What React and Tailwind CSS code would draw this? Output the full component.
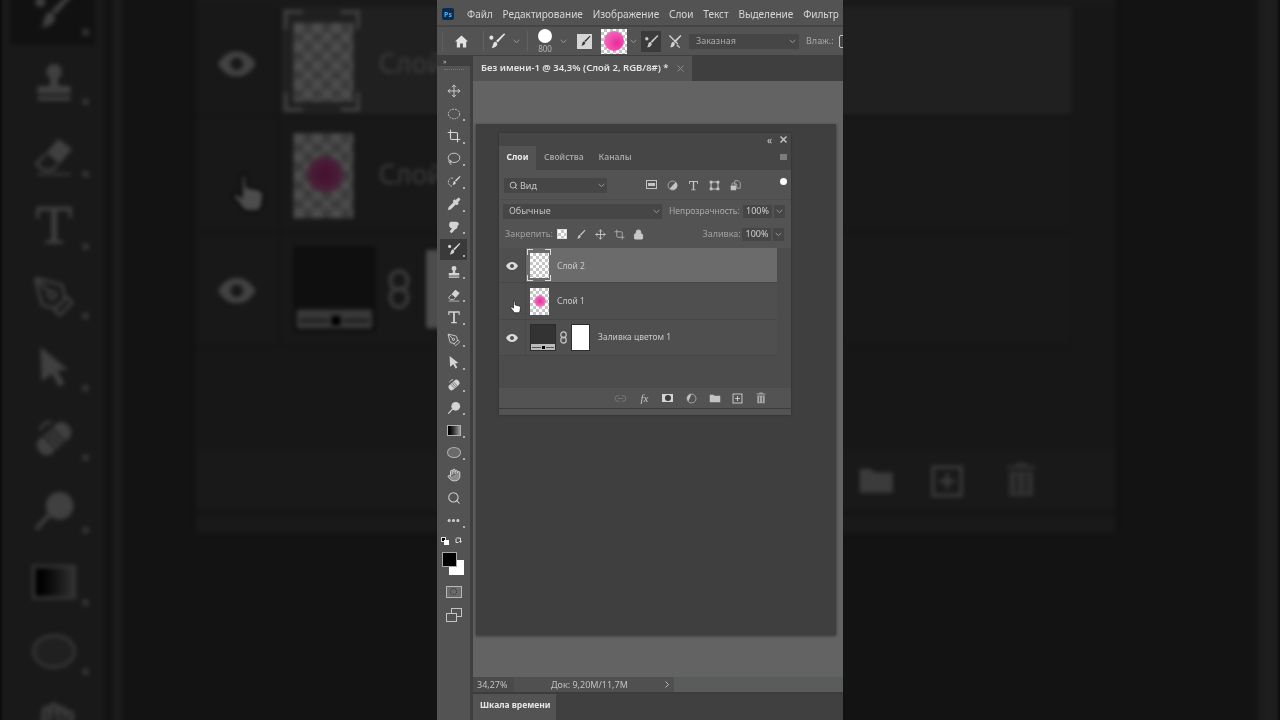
import { Move, Crop, Lasso, Pipette, PenTool, Hand, Search, Ellipsis, Link2, Lock } from "lucide-react";

const MENU = ["Файл", "Редактирование", "Изображение", "Слои", "Текст", "Выделение", "Фильтр"];
const FONT = "font-['Noto_Sans',sans-serif]";
const CHECKER = "bg-[conic-gradient(#c4c4c4_25%,#fff_0_50%,#c4c4c4_0_75%,#fff_0)] bg-[length:6px_6px]";

const Svg = ({ size = 14, children, className = "" }) => (
  <svg width={size} height={size} viewBox="0 0 16 16" fill="currentColor" className={`shrink-0 ${className}`}>{children}</svg>
);

const Chevron = ({ className = "" }) => (
  <svg width="7" height="5" viewBox="0 0 7 5" fill="none" stroke="currentColor" strokeWidth="1" className={`shrink-0 text-[#999] ${className}`}><path d="M.7 1l2.8 2.6L6.3 1" /></svg>
);

const BrushShape = () => (
  <>
    <path d="M14.3 1l1 1-6.6 7.4-1.6-1.4z" />
    <path d="M6.6 8.6c1.300.3 2 1.500 1.600 2.800-.5 1.700-2.700 2.800-5 2.800 1-1 1-2.300 1.400-3.500.4-1.200 1-2.300 2-2.100z" />
  </>
);

const HomeIcon = () => <Svg size={15}><path d="M8 1.500L1 8h2v6.500h3.500V10h3v4.500H13V8h2z" /></Svg>;
const BrushTool = ({ size = 14 }) => <Svg size={size}><circle cx="3" cy="5" r="1.800" /><BrushShape /></Svg>;
const Marquee = () => <Svg><ellipse cx="8" cy="8" rx="6.500" ry="5.500" fill="none" stroke="currentColor" strokeWidth="1" strokeDasharray="2 1.200" /></Svg>;
const QuickSelect = () => <Svg><path d="M7 3.500C3.500 3 1.500 5 1.500 8s2.500 5 5 5" fill="none" stroke="currentColor" strokeDasharray="2 1.200" /><path d="M14.500 1l1 1-5 5.500-1.500-1.300z" /><path d="M8.500 7c1.200.2 1.800 1.300 1.400 2.400-.4 1.200-2 2-3.600 2 .7-.9.600-1.700.9-2.700.3-1 .6-1.900 1.300-1.700z" /></Svg>;
const Healing = () => <Svg><path d="M4 2h6.500c2 0 3 1.200 3 2.600 0 1-.6 1.600-1.500 2 .4 1.800-.6 3.600-2.500 4L5.300 15 3 13l2.700-3.400C3.500 9 2 7.300 2.500 5 2.800 3.500 3 2.500 4 2z" /></Svg>;
const Stamp = () => <Svg><circle cx="8" cy="4" r="2.800" /><path d="M6.800 6h2.400l.4 3.200H14V12H2V9.200h4.400zM2 13h12v1.500H2z" /></Svg>;
const EraserIcon = () => <Svg><path d="M9.500 2l5 3.800-4.600 5.400-4.700-4z" /><path d="M5 7.600l-3.400 3.500 2.400 2.200h3.400L9.300 11.500" fill="none" stroke="currentColor" /><path d="M2 14.500h12v.8H2z" /></Svg>;
const TypeIcon = ({ size = 14 }) => <Svg size={size}><path d="M1.500 1.500h13v4.200h-1.200V3H9v10.800h2.200V15H4.800v-1.200H7V3H2.700v2.700H1.500z" /></Svg>;
const Arrow = () => <Svg><path d="M3 1l10 8.200-3.800.4 2.600 4.600-2 1.200-2.600-4.700L3.500 13.500z" /></Svg>;
const Bandage = () => <Svg><g transform="rotate(-42 8 8)"><rect x="1" y="4.500" width="14" height="7" rx="3" /><path d="M6 4.500v7M8 4.500v7M10 4.500v7" stroke="#535353" strokeWidth=".7" /></g><path d="M3 5c.5-2 2-3 4-3" fill="none" stroke="currentColor" /></Svg>;
const Sponge = () => <Svg><circle cx="10" cy="6" r="5" /><path d="M6.500 9L1.500 14.500" stroke="currentColor" strokeWidth="1.400" /></Svg>;

const Gradient = () => <div className="h-[11px] w-[14px] border border-[#b0b0b0] bg-linear-to-r from-black to-[#a0a0a0]" />;
const EllipseIcon = () => <div className="h-[11px] w-[14px] rounded-[50%] border border-[#b0b0b0] bg-[#6a6a6a]" />;

const TOOLS = [
  { key: "move", icon: <Move size={14} strokeWidth={1.600} />, fly: false },
  { key: "marquee", icon: <Marquee /> },
  { key: "crop", icon: <Crop size={14} strokeWidth={2} /> },
  { key: "lasso", icon: <Lasso size={14} strokeWidth={1.500} /> },
  { key: "quick", icon: <QuickSelect /> },
  { key: "drop", icon: <Pipette size={14} fill="currentColor" strokeWidth={1.500} /> },
  { key: "heal", icon: <Healing /> },
  { key: "brush", icon: <BrushTool />, active: true },
  { key: "stamp", icon: <Stamp /> },
  { key: "eraser", icon: <EraserIcon /> },
  { key: "type", icon: <TypeIcon /> },
  { key: "pen", icon: <PenTool size={14} strokeWidth={1.500} /> },
  { key: "arrow", icon: <Arrow /> },
  { key: "bandage", icon: <Bandage /> },
  { key: "sponge", icon: <Sponge /> },
  { key: "gradient", icon: <Gradient /> },
  { key: "ellipse", icon: <EllipseIcon /> },
  { key: "hand", icon: <Hand size={14} fill="#8c8c8c" strokeWidth={1.600} />, fly: false },
  { key: "zoom", icon: <Search size={14} strokeWidth={1.800} />, fly: false },
  { key: "more", icon: <Ellipsis size={15} strokeWidth={3} /> },
];

function Tool({ icon, active, fly = true }) {
  return (
    <div className="relative flex h-[22.6px] items-center justify-center text-[#d4d4d4]">
      {active && <div className="absolute inset-x-[3px] inset-y-px bg-[#3a3a3a]" />}
      <div className="relative">{icon}</div>
      {fly && <div className="absolute bottom-[4px] right-[5px] size-[2px] bg-[#b0b0b0]" />}
    </div>
  );
}

function ToolColumn() {
  return (
    <aside className="flex w-[33px] shrink-0 flex-col bg-[#535353]">
      <div className="flex h-[10px] items-center bg-[#3f3f3f] pl-[6px] text-[7px] leading-none text-[#bbb]"><span>»</span></div>
      <div className="flex h-[14px] items-start justify-center pt-[3px]"><div className="h-px w-[20px] border-t border-dotted border-[#777]" /></div>
      {TOOLS.map((t) => <Tool key={t.key} icon={t.icon} active={t.active} fly={t.fly} />)}
      <div className="mt-[5px] flex items-center justify-between pl-[4px] pr-[7px] text-[#ddd]">
        <div className="relative size-[8px]"><div className="absolute left-0 top-0 size-[5px] border border-[#ddd] bg-black" /><div className="absolute bottom-0 right-0 size-[5px] bg-white" /></div>
        <Svg size={8}><path d="M3 2h8v8M13 8l-2 3-2-3M2 3v8h5" fill="none" stroke="currentColor" strokeWidth="2" /></Svg>
      </div>
      <div className="relative mt-[7px] h-[24px] w-full">
        <div className="absolute left-[12px] top-[8px] size-[15px] bg-white" />
        <div className="absolute left-[5px] top-0 size-[15px] border border-[#aaa] bg-black" />
      </div>
      <div className="mx-auto mt-[10px] flex h-[12px] w-[16px] items-center justify-center border border-[#b8b8b8] bg-[#6a6a6a]"><div className="size-[7px] rounded-full border border-dotted border-[#333]" /></div>
      <div className="relative mx-auto mt-[10px] h-[14px] w-[16px]">
        <div className="absolute right-0 top-0 h-[9px] w-[11px] border border-[#c4c4c4]" />
        <div className="absolute bottom-0 left-0 h-[9px] w-[11px] border border-[#c4c4c4] bg-[#535353]" />
      </div>
    </aside>
  );
}

function OptionsBar() {
  return (
    <div className="flex h-[28px] shrink-0 items-center bg-[#535353] text-[#e2e2e2] [&>*]:shrink-0">
      <div className="ml-[5px] h-[20px] w-px bg-[#616161]" />
      <div className="ml-[11px]"><HomeIcon /></div>
      <div className="ml-[14px] h-[20px] w-px bg-[#616161]" />
      <div className="ml-[4px]"><BrushTool size={18} /></div>
      <Chevron className="ml-[7px]" />
      <div className="ml-[7px] h-[20px] w-px bg-[#616161]" />
      <div className="ml-[7px] flex w-[20px] flex-col items-center">
        <div className="size-[14px] rounded-full bg-white" />
        <span className="mt-[1px] text-[8px] leading-[9px] text-[#b4b4b4]">800</span>
      </div>
      <Chevron className="ml-[5px]" />
      <div className="ml-[10px] flex size-[15px] items-center justify-center bg-[#d6d6d6] text-[#333]"><Svg size={12}><BrushShape /></Svg></div>
      <div className={`ml-[9px] flex h-[25px] w-[26px] items-center justify-center ${CHECKER}`}>
        <div className="size-[20px] rounded-full bg-[radial-gradient(circle_at_65%_60%,#ec2a98,#f57fcb)]" />
      </div>
      <Chevron className="ml-[3px]" />
      <div className="ml-[4px] flex h-[21px] w-[20px] items-center justify-center bg-[#3b3b3b] text-[#c8c8c8]"><BrushTool size={15} /></div>
      <div className="ml-[6px] text-[#d4d4d4]"><Svg size={15}><BrushShape /><path d="M2 2l9 9 1-1-9-9zM10 12l3 3 1-1-3-3z" /></Svg></div>
      <div className="ml-[7px] flex h-[15px] w-[110px] items-center justify-between bg-[#464646] pl-[7px] pr-[3px] text-[9px] text-[#a8a8a8]">
        <span>Заказная</span><Chevron />
      </div>
      <span className="ml-[7px] text-[9px] text-[#a8a8a8]">Влаж.:</span>
      <div className="ml-[5px] h-[13px] w-[12px] rounded-[2px] border border-[#c4c4c4] bg-[#464646]" />
    </div>
  );
}

const Select = ({ className, children, icon }) => (
  <div className={`flex h-[15px] shrink-0 items-center justify-between bg-[#464646] pr-[2px] text-[9px] text-[#c4c4c4] ${className}`}>
    <span className="flex items-center gap-[2px]">{icon}{children}</span><Chevron />
  </div>
);

const Percent = ({ ml }) => (
  <div className={`flex items-center ${ml}`}>
    <div className="flex h-[13px] w-[29px] items-center justify-center bg-[#464646] text-[9px] text-[#cfcfcf]"><span>100%</span></div>
    <div className="ml-[2px] flex h-[13px] w-[11px] items-center justify-center bg-[#464646]"><Chevron /></div>
  </div>
);

const EyeIcon = () => (
  <svg width="12" height="8" viewBox="0 0 12 8" className="shrink-0"><path d="M0 4c1.500-2.500 3.500-4 6-4s4.500 1.500 6 4c-1.500 2.500-3.500 4-6 4S1.500 6.500 0 4z" fill="#dcdcdc" /><circle cx="6" cy="4" r="2" fill="#505050" /></svg>
);

const Cursor = () => (
  <svg width="12" height="14" viewBox="0 0 12 14" className="shrink-0"><path d="M3.500 1.200c.6-.6 1.300-.2 1.400.5L5.200 5l3.300.7c1.300.3 2 1 2 2.100L10 11c-.2 1-1 1.800-2 1.800H5.500c-.8 0-1.300-.4-1.800-1L1 8.300c-.6-.8.400-1.800 1.300-1.100l1.200 1z" fill="#fff" stroke="#111" strokeWidth=".7" /></svg>
);

const ChainIcon = () => (
  <svg width="7" height="13" viewBox="0 0 7 13" fill="none" stroke="#c8c8c8" strokeWidth="1.200" className="shrink-0"><rect x=".8" y=".8" width="5.400" height="6" rx="2.700" /><rect x=".8" y="6.200" width="5.400" height="6" rx="2.700" /></svg>
);

function LayerRow({ height, active, eye, children, label, labelClass = "" }) {
  return (
    <div className={`flex w-full border-b border-[#464646] ${height}`}>
      <div className={`flex w-[27px] shrink-0 items-center justify-center border-r border-[#484848] bg-[#4f4f4f] ${active ? "pt-[2px]" : ""}`}>
        {eye ? <EyeIcon /> : <div className="ml-[8px] mt-[12px]"><Cursor /></div>}
      </div>
      <div className={`flex flex-1 items-center ${active ? "bg-[#6b6b6b]" : "bg-[#4f4f4f]"}`}>
        {children}
        <span className={`whitespace-nowrap text-[8.500px] text-[#c8c8c8] ${labelClass}`}>{label}</span>
      </div>
    </div>
  );
}

function LayersPanel({ ghost }) {
  return (
    <div className="flex h-[282px] w-[292px] flex-col bg-[#535353] shadow-[0_0_2px_#2c2c2c]">
      <div className="flex h-[13px] shrink-0 items-center justify-end gap-[8px] bg-[#464646] pr-[4px] text-[#c8c8c8]">
        <span className="text-[10px] leading-none">«</span>
        <svg width="7" height="7" viewBox="0 0 7 7" stroke="currentColor" strokeWidth="1.400"><path d="M.5.5l6 6M6.500.5l-6 6" /></svg>
      </div>
      <div className="flex h-[24px] shrink-0 items-center bg-[#464646] pb-[2px] pr-[4px] text-[8.500px] font-semibold text-[#a2a2a2]">
        <div className="-mb-[2px] flex h-[24px] w-[37px] items-center justify-center bg-[#535353] pb-[2px] font-bold text-[#ececec]"><span>Слои</span></div>
        <span className="ml-[8px]">Свойства</span>
        <span className="ml-[15px]">Каналы</span>
        <div className="ml-auto h-[6px] w-[7px] bg-[#7c7c7c]" />
      </div>

      <div className="flex h-[29px] shrink-0 items-center pl-[5px] pt-[2px] text-[#c4c4c4]">
        <Select className="w-[103px] pl-[5px]" icon={<Search size={9} strokeWidth={2.500} />}>Вид</Select>
        <div className="ml-[34px] flex">
          <div className="flex w-[21px] justify-center"><div className="flex h-[9px] w-[11px] items-center justify-center border border-[#c4c4c4]"><div className="h-[3px] w-[7px] bg-[#c4c4c4]" /></div></div>
          <div className="flex w-[21px] justify-center"><Svg size={11}><circle cx="8" cy="8" r="6.500" fill="none" stroke="currentColor" /><path d="M8 8l5-5a6.500 6.500 0 0 1-9 9.500z" /></Svg></div>
          <div className="flex w-[21px] justify-center"><TypeIcon size={11} /></div>
          <div className="flex w-[21px] justify-center"><Svg size={11}><path d="M3 3h10v10H3z" fill="none" stroke="currentColor" strokeWidth="1.500" /><path d="M1 1h4v4H1zM11 1h4v4h-4zM1 11h4v4H1zM11 11h4v4h-4z" /></Svg></div>
          <div className="flex w-[21px] justify-center"><Svg size={11}><path d="M7 1h5l3 3v8h-5V6H7z" fill="none" stroke="currentColor" /><rect x="1" y="8" width="8" height="7" rx="1" /><path d="M3 8V6a2 2 0 0 1 4 0v2" fill="none" stroke="currentColor" /></Svg></div>
        </div>
        <div className="mb-[8px] ml-[34px] size-[7px] rounded-full bg-white" />
      </div>

      <div className="flex h-[25px] shrink-0 items-center border-t border-[#4c4c4c] pb-[2px] pl-[4px]">
        <Select className="w-[159px] pl-[6px]">Обычные</Select>
        <span className="ml-[7px] w-[71px] whitespace-nowrap text-[8.500px] text-[#a8a8a8]">Непрозрачность:</span>
        <Percent ml="ml-[3px]" />
      </div>

      <div className="flex h-[24px] shrink-0 items-center pb-[4px] pl-[6px] text-[#c8c8c8]">
        <span className="w-[47px] text-[9px] text-[#a0a0a0]">Закрепить:</span>
        <div className="flex">
          <div className="flex w-[19.300px] justify-center"><div className={`size-[10px] border border-[#ddd] ${CHECKER} bg-[length:4px_4px]`} /></div>
          <div className="flex w-[19.300px] justify-center"><Svg size={11}><BrushShape /></Svg></div>
          <div className="flex w-[19.300px] justify-center"><Move size={11} strokeWidth={2} /></div>
          <div className="flex w-[19.300px] justify-center"><Crop size={11} strokeWidth={1.500} /></div>
          <div className="flex w-[19.300px] justify-center"><Lock size={11} fill="currentColor" strokeWidth={2} /></div>
        </div>
        <span className="ml-[54px] w-[37px] text-[9px] text-[#a0a0a0]">Заливка:</span>
        <Percent ml="ml-[3px]" />
      </div>

      <div className="flex h-[140px] shrink-0 flex-col bg-[#4c4c4c] pr-[14px]">
        <LayerRow height="h-[35px]" active eye label={ghost ? "Слой" : "Слой 2"} labelClass="visible! ml-[6px] mt-[2px]">
          <div className="relative ml-[1px] flex h-[32px] w-[24px] items-center justify-center">
            <div className={`h-[25px] w-[19px] ${CHECKER}`} />
            <div className="absolute left-0 top-0 size-[6px] border-l border-t border-[#ddd]" />
            <div className="absolute right-0 top-0 size-[6px] border-r border-t border-[#ddd]" />
            <div className="absolute bottom-0 left-0 size-[6px] border-b border-l border-[#ddd]" />
            <div className="absolute bottom-0 right-0 size-[6px] border-b border-r border-[#ddd]" />
          </div>
        </LayerRow>
        <LayerRow height="h-[37px]" label={ghost ? "Слой" : "Слой 1"} labelClass="visible! ml-[8px]">
          <div className={`relative ml-[4px] flex h-[27px] w-[19px] items-center justify-center ${CHECKER}`}>
            <div className="size-[12px] rounded-full bg-[radial-gradient(circle,#e92f9a_0%,#ee5fb6_50%,transparent_95%)]" />
          </div>
        </LayerRow>
        <LayerRow height="h-[36px]" eye label="Заливка цветом 1" labelClass="ml-[8px]">
          <div className="ml-[4px] flex h-[27px] w-[26px] flex-col justify-end border border-[#2c2c2c] bg-[#333]">
            <div className="flex h-[6px] items-center gap-px bg-[#bcbcbc] px-px">
              <div className="h-px flex-1 bg-[#555]" />
              <div className="h-[3px] w-[3px] bg-black" />
              <div className="h-px flex-1 bg-[#555]" />
            </div>
          </div>
          <div className="ml-[2px] mr-[3px] flex w-[10px] justify-center"><ChainIcon /></div>
          <div className="h-[27px] w-[19px] border border-[#2c2c2c] bg-white" />
        </LayerRow>
      </div>

      <div className="flex h-[20px] shrink-0 items-center justify-end pr-[18px] text-[#c4c4c4]">
        <div className="flex w-[23.400px] justify-center text-[#7e7e7e]"><Link2 size={13} strokeWidth={1.500} /></div>
        <div className="flex w-[23.400px] justify-center font-['Liberation_Serif',serif] text-[11px] italic leading-none"><span>fx</span></div>
        <div className="flex w-[23.400px] justify-center"><div className="flex h-[8px] w-[11px] items-center justify-center bg-[#d4d4d4]"><div className="size-[6px] rounded-full bg-[#3c3c3c]" /></div></div>
        <div className="flex w-[23.400px] justify-center"><Svg size={11}><circle cx="8" cy="8" r="6.500" fill="none" stroke="currentColor" /><path d="M8 1.500a6.500 6.500 0 0 0-4.600 11z" /></Svg></div>
        <div className="flex w-[23.400px] justify-center"><Svg size={12}><path d="M1 3.500h5l1 1.500h8v8.500H1z" /></Svg></div>
        <div className="flex w-[23.400px] justify-center"><Svg size={11}><path d="M1.500 1.500h13v13h-13z" fill="none" stroke="currentColor" strokeWidth="1.500" /><path d="M7.200 4.500h1.600v2.700h2.700v1.600H8.800v2.700H7.200V8.800H4.500V7.200h2.700z" /></Svg></div>
        <div className="flex w-[23.400px] justify-center text-[#a4a4a4]"><Svg size={12}><path d="M6 .8h4l.6 1.200H14v1.300H2V2h3.400zM3 4.500h10V15H3zM5.500 6v7.500h1V6zM9.500 6v7.500h1V6z" fillRule="evenodd" /></Svg></div>
      </div>
      <div className="h-px shrink-0 bg-[#3c3c3c]" />
    </div>
  );
}

function Photoshop({ ghost }) {
  return (
    <div className={`flex h-[720px] w-[406px] shrink-0 flex-col overflow-hidden bg-[#3f3f3f] ${FONT}`}>
      <div className="flex h-[25px] shrink-0 items-center bg-[#535353] pl-[5px] pt-[3px] text-[10px] text-[#d6d6d6]">
        <div className="flex size-[12px] shrink-0 items-center justify-center rounded-[2px] bg-[#0b2c4c] text-[7px] font-bold leading-none text-[#4fb4f5]"><span>Ps</span></div>
        <div className="ml-[13px] flex shrink-0 gap-[9.800px] whitespace-nowrap">
          {MENU.map((m) => <span key={m}>{m}</span>)}
        </div>
      </div>
      <div className="h-[2px] shrink-0 bg-[#454545]" />
      <OptionsBar />
      <div className="h-px shrink-0 bg-[#3f3f3f]" />

      <div className="flex min-h-0 flex-1">
        <ToolColumn />
        <div className="w-[3px] shrink-0 bg-[#3f3f3f]" />
        <main className="flex min-w-0 flex-1 flex-col">
          <div className="flex h-[25px] shrink-0 bg-[#3f3f3f]">
            <div className="flex w-[219px] items-center justify-between bg-[#535353] pl-[8px] pr-[8px]">
              <span className="whitespace-nowrap text-[9.500px] font-semibold text-[#e4e4e4]">Без имени-1 @ 34,3% (Слой 2, RGB/8#) *</span>
              <svg width="7" height="7" viewBox="0 0 7 7" stroke="#8c8c8c" strokeWidth="1" className="shrink-0"><path d="M.5.5l6 6M6.500.5l-6 6" /></svg>
            </div>
          </div>
          <div className="min-h-0 flex-1 bg-[#636363] pl-[3px] pt-[43px]">
            <div className="h-[511px] w-[360px] bg-[#3f3f3f] pl-[23px] pt-[9px] shadow-[0_1px_3px_#333]">
              <LayersPanel ghost={ghost} />
            </div>
          </div>
          <div className="flex h-[15px] shrink-0 items-center bg-[#5a5b5b] text-[9px] text-[#c0c0c0]">
            <div className="flex h-full w-[41px] items-center bg-[#4a4a4a] pl-[4px]"><span>34,27%</span></div>
            <div className="flex h-full w-[160px] items-center justify-between bg-[#505050] pl-[37px] pr-[5px]">
              <span>Док: 9,20M/11,7M</span>
              <svg width="4" height="7" viewBox="0 0 4 7" fill="none" stroke="#bbb"><path d="M.5.5l3 3-3 3" /></svg>
            </div>
          </div>
          <div className="h-[2px] shrink-0 bg-[#3c3c3c]" />
          <div className="flex h-[26px] shrink-0 bg-[#404040]">
            <div className="flex w-[83px] items-center whitespace-nowrap bg-[#535353] pb-[3px] pl-[7px] text-[8.500px] font-bold text-[#e6e6e6]"><span>Шкала времени</span></div>
          </div>
        </main>
      </div>
    </div>
  );
}

export default function App() {
  return (
    <div className="relative flex h-[720px] w-[1280px] justify-center overflow-hidden bg-black">
      {/* same frame zoomed and dimmed behind the strip */}
      <div aria-hidden="true" className="absolute inset-0 flex scale-[3.150] justify-center blur-[0.7px] brightness-[0.3] [&_span]:invisible">
        <Photoshop ghost />
      </div>
      <div className="relative blur-[0.35px]">
        <Photoshop />
      </div>
    </div>
  );
}
